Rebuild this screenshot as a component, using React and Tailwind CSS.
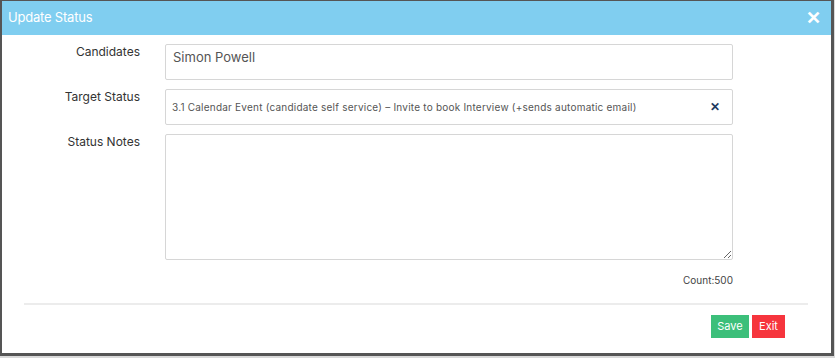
import React from 'react'

function App() {
    return (
        <div className='w-[835px] h-[358px] bg-[#d9d9d9] font-["Inter",sans-serif]'>
            <div className='w-[834px] h-[356px] bg-white border-l-2 border-t border-r-[3px] border-b-[3px] border-[#555] flex flex-col'>
                <div className='h-[34px] bg-[#80cef0] flex items-center justify-between pl-[6px] pr-[10px] shrink-0'>
                    <span className='text-white text-[13px] tracking-[-0.2px]'>Update Status</span>
                    <span className='text-white text-[18px] font-bold leading-none'>✕</span>
                </div>
                <div className='flex flex-col pt-[9px]'>
                    <div className='flex'>
                        <div className='w-[138px] text-right text-[12px] leading-[14px] text-[#333] pt-[1px]'>Candidates</div>
                        <div className='ml-[25px] w-[568px] h-[36px] border border-[#d6d6d6] rounded-[2px] px-[7px] pt-[3px] text-[13px] text-[#555]'>
                            Simon Powell
                        </div>
                    </div>
                    <div className='flex mt-[9px]'>
                        <div className='w-[138px] text-right text-[12px] leading-[14px] text-[#333] pt-[1px]'>Target Status</div>
                        <div className='ml-[25px] w-[568px] h-[36px] border border-[#d6d6d6] rounded-[2px] pl-[6px] pr-[12px] flex items-center justify-between'>
                            <span className='text-[10px] text-[#555] tracking-[0.22px]'>3.1 Calendar Event (candidate self service) – Invite to book Interview (+sends automatic email)</span>
                            <span className='text-[#1d3a5f] text-[12px] font-bold leading-none'>✕</span>
                        </div>
                    </div>
                    <div className='flex mt-[9px]'>
                        <div className='w-[138px] text-right text-[12px] leading-[14px] text-[#333] pt-[1px]'>Status Notes</div>
                        <textarea className='ml-[25px] w-[568px] h-[126px] border border-[#d6d6d6] rounded-[2px] outline-none resize-y' defaultValue='' />
                    </div>
                    <div className='flex justify-end w-[731px] mt-[13px]'>
                        <span className='text-[10px] text-[#444]'>Count:500</span>
                    </div>
                    <div className='ml-[22px] w-[784px] h-[2px] bg-[#ececec] mt-[15px]' />
                    <div className='flex justify-end gap-[3px] w-[783px] mt-[10px]'>
                        <button className='bg-[#3cbf7a] text-white text-[11px] w-[38px] h-[23px]'>Save</button>
                        <button className='bg-[#f6353d] text-white text-[11px] w-[33px] h-[23px]'>Exit</button>
                    </div>
                </div>
            </div>
        </div>
    )
}

export default App
